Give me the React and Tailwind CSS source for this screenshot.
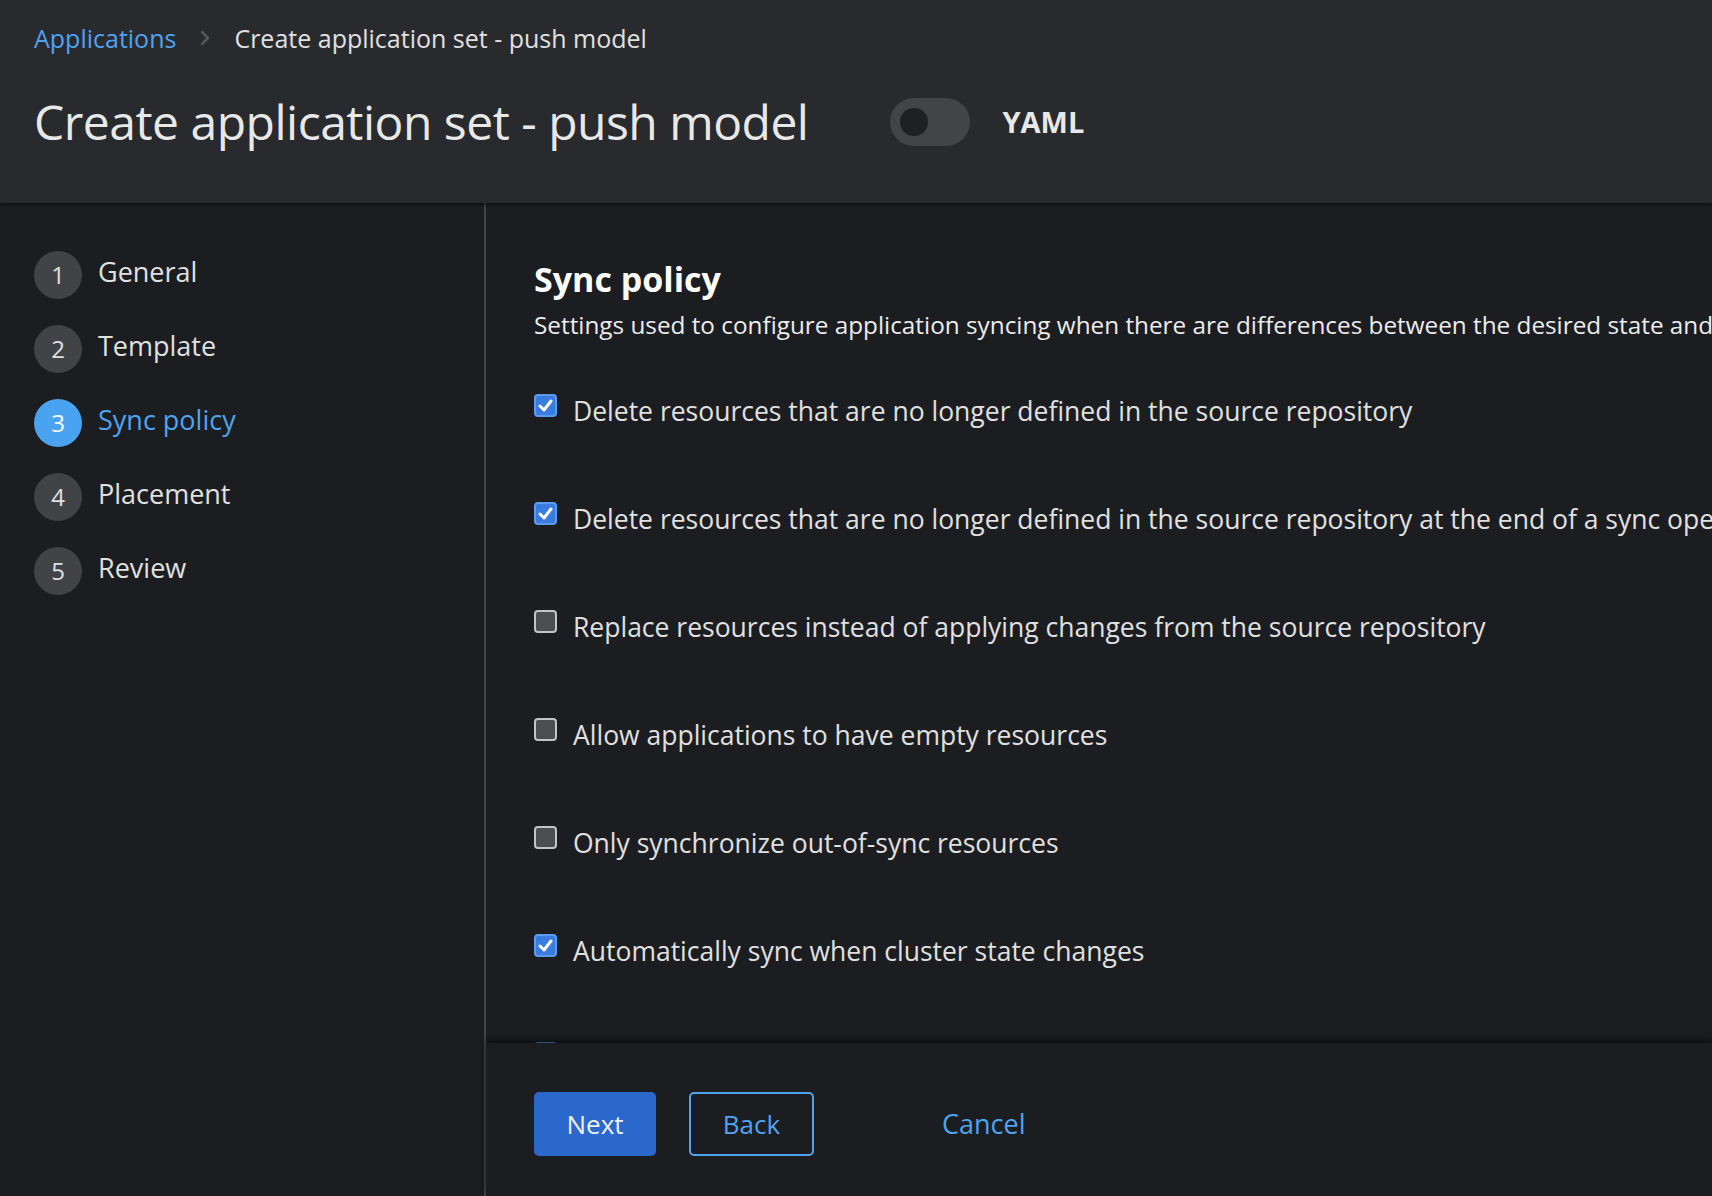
import React from "react";

const steps = [
  { n: 1, label: "General" },
  { n: 2, label: "Template" },
  { n: 3, label: "Sync policy", active: true },
  { n: 4, label: "Placement" },
  { n: 5, label: "Review" },
];

const options = [
  { label: "Delete resources that are no longer defined in the source repository", checked: true },
  {
    label:
      "Delete resources that are no longer defined in the source repository at the end of a sync operation",
    checked: true,
  },
  { label: "Replace resources instead of applying changes from the source repository", checked: false },
  { label: "Allow applications to have empty resources", checked: false },
  { label: "Only synchronize out-of-sync resources", checked: false },
  { label: "Automatically sync when cluster state changes", checked: true },
  { label: "Automatically create namespace if it does not exist", checked: true },
];

const Checkbox = ({ checked }) =>
  checked ? (
    <span className="mt-[1px] flex h-[23px] w-[23px] shrink-0 items-center justify-center rounded-[4px] border-2 border-[#5b9cf0] bg-[#3b7be0]">
      <svg width="15" height="13" viewBox="0 0 15 13" fill="none">
        <path d="M2 7 L6 11 L13 2" stroke="white" strokeWidth="3" strokeLinecap="round" strokeLinejoin="round" />
      </svg>
    </span>
  ) : (
    <span className="mt-[1px] h-[23px] w-[23px] shrink-0 rounded-[4px] border-2 border-[#c4c4c6] bg-[#4c4d51]" />
  );

export default function App() {
  return (
    <div className="flex h-[1196px] w-full flex-col overflow-hidden bg-[#1b1d21] font-['Open_Sans',sans-serif] text-[#e0e0e0]">
      <header className="z-10 h-[203px] shrink-0 bg-[#292a2e] px-[34px] pt-[22px] shadow-[0_2px_4px_rgba(0,0,0,0.5)]">
        <nav className="flex items-center text-[25px] leading-[32px]">
          <span className="text-[#4fa3ef]">Applications</span>
          <svg className="mx-[24px]" width="10" height="16" viewBox="0 0 10 16" fill="none">
            <path d="M2 2 L8 8 L2 14" stroke="#55575b" strokeWidth="2.5" strokeLinecap="round" strokeLinejoin="round" />
          </svg>
          <span className="text-[#e0e0e0]">Create application set - push model</span>
        </nav>
        <div className="mt-[36px] flex items-center">
          <h1 className="text-[48px] leading-[64px] font-normal tracking-[-0.5px] text-[#e8e8e8]">
            Create application set - push model
          </h1>
          <div className="ml-[82px] flex h-[48px] w-[80px] items-center rounded-full bg-[#434448] pl-[10px]">
            <span className="h-[28px] w-[28px] rounded-full bg-[#1f2023]" />
          </div>
          <span className="ml-[32px] text-[29px] font-bold text-[#e8e8e8]">YAML</span>
        </div>
      </header>

      <div className="flex min-h-0 flex-1">
        <aside className="w-[486px] shrink-0 border-r-2 border-[#444548] pl-[34px] pt-[48px]">
          <ul className="flex flex-col gap-[26px]">
            {steps.map((s) => (
              <li key={s.n} className="flex items-center">
                <span
                  className={`flex h-[48px] w-[48px] items-center justify-center rounded-full text-[24px] ${
                    s.active ? "bg-[#4aa3f0] text-white" : "bg-[#424347] text-[#e0e0e0]"
                  }`}
                >
                  {s.n}
                </span>
                <span
                  className={`ml-[16px] -mt-[6px] text-[27px] ${s.active ? "text-[#4fa3ef]" : "text-[#e0e0e0]"}`}
                >
                  {s.label}
                </span>
              </li>
            ))}
          </ul>
        </aside>

        <main className="flex min-w-0 flex-1 flex-col">
          <div className="min-h-0 flex-1 overflow-hidden pl-[48px] pt-[55px]">
            <h2 className="text-[34px] leading-[42px] font-bold text-white">Sync policy</h2>
            <p className="mt-[7px] whitespace-nowrap text-[24.3px] leading-[36px] text-[#ececec]">
              Settings used to configure application syncing when there are differences between the desired state and the live state of the cluster.
            </p>
            <div className="mt-[50px] flex flex-col gap-[72px]">
              {options.map((o) => (
                <label key={o.label} className="flex items-start gap-[16px] whitespace-nowrap">
                  <Checkbox checked={o.checked} />
                  <span className="text-[26.5px] leading-[36px] text-[#e0e0e0]">{o.label}</span>
                </label>
              ))}
            </div>
          </div>
          <footer className="z-10 flex h-[153px] shrink-0 items-start bg-[#1b1d21] pl-[48px] pt-[49px] shadow-[0_-3px_6px_rgba(0,0,0,0.6)]">
            <button className="h-[64px] w-[122px] rounded-[5px] bg-[#2b68cc] text-[26px] text-[#f0f0f0]">Next</button>
            <button className="ml-[33px] h-[64px] w-[125px] rounded-[5px] border-2 border-[#4fa3ef] text-[26px] text-[#4fa3ef]">
              Back
            </button>
            <button className="ml-[98px] h-[64px] px-[30px] text-[27px] text-[#4fa3ef]">Cancel</button>
          </footer>
        </main>
      </div>
    </div>
  );
}
